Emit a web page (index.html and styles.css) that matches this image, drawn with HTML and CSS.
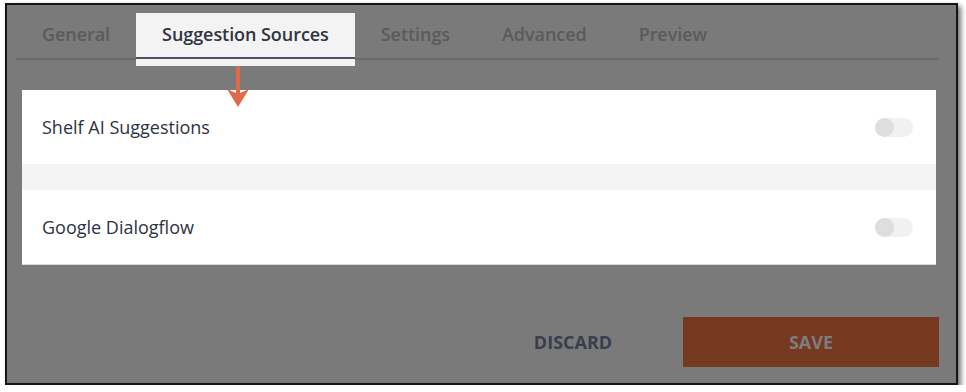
FILE: index.html
```html
<!DOCTYPE html>
<html>
<head>
	<meta charset="UTF-8">
	<title>Suggestion Sources</title>
	<link rel="stylesheet" href="styles.css">
</head>
<body>
	<div class="frame">
		<div class="tabs">
			<div class="tab">General</div>
			<div class="tab active">
				<span class="tab-label">Suggestion Sources</span>
				<span class="tab-bar"></span>
			</div>
			<div class="tab">Settings</div>
			<div class="tab">Advanced</div>
			<div class="tab">Preview</div>
		</div>

		<!-- annotation arrow -->
		<svg class="arrow" width="24" height="42" viewBox="0 0 24 42">
			<line x1="12" y1="0" x2="12" y2="30" stroke="#e0694a" stroke-width="4"/>
			<polygon points="1,23 12,28 23,23 12,41" fill="#e0694a"/>
		</svg>

		<div class="card">
			<div class="row">
				<span class="row-label">Shelf AI Suggestions</span>
				<span class="toggle"><span class="knob"></span></span>
			</div>
			<div class="band"></div>
			<div class="row">
				<span class="row-label">Google Dialogflow</span>
				<span class="toggle"><span class="knob"></span></span>
			</div>
		</div>

		<div class="actions">
			<button class="btn-discard">DISCARD</button>
			<button class="btn-save">SAVE</button>
		</div>
	</div>
</body>
</html>
```

FILE: styles.css
```css
body {
	margin: 0;
	background: #ffffff;
	font-family: "Open Sans", "Liberation Sans", sans-serif;
}
.frame {
	position: relative;
	margin: 3px 0 0 5px;
	width: 949px;
	height: 378px;
	border: 2px solid #141414;
	background: #7a7a7a;
	box-shadow: 3px 3px 5px rgba(0, 0, 0, 0.55);
}
.tabs {
	display: flex;
	align-items: flex-start;
	height: 45px;
	margin: 8px 17px 0 9px;
	border-bottom: 2px solid #6b6b6b;
}
.tab {
	padding: 9px 26px 0;
	font-size: 18px;
	font-weight: 600;
	line-height: 25px;
	letter-spacing: -0.06px;
	color: #5a5a5a;
}
.tab.active {
	display: flex;
	flex-direction: column;
	height: 44px;
	background: #f3f3f3;
	color: #2f3441;
}
.tab-bar {
	display: block;
	height: 2px;
	margin: 10px -26px 0;
	background: #4c5568;
}
.arrow {
	position: absolute;
	left: 219px;
	top: 61px;
}
.card {
	margin: 30px 20px 0 15px;
	background: #ffffff;
	border-bottom: 1px solid #d8d8d8;
}
.row {
	display: flex;
	align-items: center;
	justify-content: space-between;
	height: 74px;
	padding: 0 23px 0 20px;
}
.row-label {
	font-size: 18px;
	color: #2d3342;
}
.band {
	height: 26px;
	background: #f4f4f4;
}
.toggle {
	display: flex;
	width: 38px;
	height: 19px;
	border-radius: 10px;
	background: #f1f1f1;
}
.knob {
	width: 19px;
	height: 19px;
	border-radius: 50%;
	background: #dedede;
}
.actions {
	display: flex;
	justify-content: flex-end;
	align-items: center;
	gap: 32px;
	margin: 52px 17px 0 0;
}
.btn-discard,
.btn-save {
	font-family: "Open Sans", "Liberation Sans", sans-serif;
	font-size: 18px;
	font-weight: 700;
	border: none;
	cursor: pointer;
}
.btn-discard {
	width: 156px;
	height: 50px;
	background: transparent;
	color: #383e4c;
}
.btn-save {
	width: 256px;
	height: 50px;
	background: #753920;
	color: #7d7d7d;
}
```
